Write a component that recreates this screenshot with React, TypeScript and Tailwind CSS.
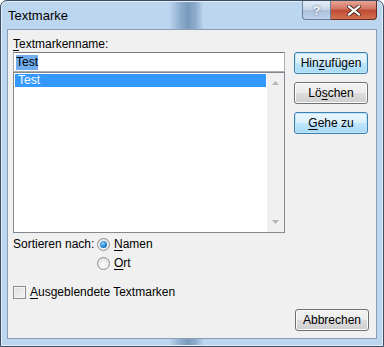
import React from 'react';

const font = { fontFamily: '"Liberation Sans", Arial, sans-serif' };

const Key: React.FC<{ children: React.ReactNode }> = ({ children }) => (
  <span className="underline underline-offset-[2px] decoration-[1px]">{children}</span>
);

const Button: React.FC<{ children: React.ReactNode; active?: boolean }> = ({ children, active }) => (
  <button
    className={`h-[22px] w-[74px] rounded-[3px] border text-[12px] leading-[20px] text-black ${
      active
        ? 'border-[#3c7fb1] bg-[linear-gradient(to_bottom,#eaf6fd_0%,#d9f0fc_50%,#bee6fd_50%,#a7d9f5_100%)] shadow-[inset_0_0_0_1px_#c4e5f6]'
        : 'border-[#707070] bg-[linear-gradient(to_bottom,#f2f2f2_0%,#ebebeb_50%,#dddddd_50%,#cfcfcf_100%)] shadow-[inset_0_0_0_1px_#fcfcfc]'
    }`}
  >
    {children}
  </button>
);

const Radio: React.FC<{ checked?: boolean }> = ({ checked }) => (
  <span className="flex h-[13px] w-[13px] shrink-0 items-center justify-center rounded-full border border-[#8e8f8f] bg-[radial-gradient(circle_at_50%_60%,#ffffff_0%,#e4e4e4_70%,#cfcfcf_100%)]">
    {checked && (
      <span className="h-[7px] w-[7px] rounded-full bg-[radial-gradient(circle_at_40%_35%,#8fd2ff_0%,#1a7fd0_60%,#0d4a8a_100%)]" />
    )}
  </span>
);

export default function App() {
  return (
    <div className="w-[384px] h-[347px] overflow-hidden" style={font}>
      <div className="flex h-full w-full flex-col rounded-t-[7px] border border-[#3b4d63] bg-[linear-gradient(to_right,#bcd6f0_0%,#bcd6f0_44%,#8eadcd_47%,#7a9abd_49%,#8eadcd_51%,#bcd6f0_53%,#bcd6f0_100%)] shadow-[inset_0_0_0_1px_#e3eefa]">
        {/* title bar */}
        <div className="flex h-[28px] shrink-0 items-start">
          <div className="pl-[7px] pt-[7px] text-[13px] leading-[15px] text-black">Textmarke</div>
          <div className="ml-auto mr-[6px] flex">
            <div className="flex h-[19px] w-[29px] items-center justify-center rounded-bl-[4px] border border-t-0 border-[#6b7f98] bg-[linear-gradient(to_bottom,#e4edf7_0%,#c5d6e8_50%,#a9c0da_50%,#bfd4ea_100%)] text-[13px] font-bold leading-none text-[#f4f8fc] [text-shadow:0_0_2px_#44576e]">
              ?
            </div>
            <div className="flex h-[19px] w-[46px] items-center justify-center rounded-br-[4px] border border-l-0 border-t-0 border-[#6b2a22] bg-[linear-gradient(to_bottom,#e8a493_0%,#d27462_45%,#c14a35_50%,#d2704f_100%)]">
              <svg width="14" height="11" viewBox="0 0 14 11">
                <path d="M2 1.5 L12 9.5 M12 1.5 L2 9.5" stroke="#4a2a22" strokeWidth="4" strokeLinecap="square" />
                <path d="M2 1.5 L12 9.5 M12 1.5 L2 9.5" stroke="#ffffff" strokeWidth="2.2" strokeLinecap="square" />
              </svg>
            </div>
          </div>
        </div>

        {/* client area */}
        <div className="mx-[6px] flex h-[310px] shrink-0 flex-col border border-[#8b9cb3] bg-[#f0f0f0] pl-[5px] text-[12px] text-black">
          <div className="flex">
            <div className="flex w-[272px] flex-col">
              <div className="mt-[7px] h-[15px] leading-[15px]">
                <Key>T</Key>extmarkenname:
              </div>
              <div className="flex h-[20px] items-center border border-[#abadb3] border-t-[#7a7a7a] bg-white pl-[2px]">
                <span className="bg-[#70aef0] leading-[15px] text-black">Test</span>
              </div>
              <div className="flex h-[161px] border border-[#828790] bg-white">
                <div className="flex-1 p-[1px]">
                  <div className="h-[13px] bg-[#3399ff] pl-[3px] leading-[13px] text-white">Test</div>
                </div>
                <div className="flex w-[17px] flex-col items-center justify-between bg-[#f0f0f0] py-[8px]">
                  <svg width="7" height="4" viewBox="0 0 7 4">
                    <path d="M0 4 L3.5 0 L7 4 Z" fill="#b5b5b5" />
                  </svg>
                  <svg width="7" height="4" viewBox="0 0 7 4">
                    <path d="M0 0 L3.5 4 L7 0 Z" fill="#b5b5b5" />
                  </svg>
                </div>
              </div>
            </div>
            <div className="ml-[9px] flex flex-col gap-[8px] pt-[22px]">
              <Button active>
                Hin<Key>z</Key>ufügen
              </Button>
              <Button>
                Lö<Key>s</Key>chen
              </Button>
              <Button active>
                <Key>G</Key>ehe zu
              </Button>
            </div>
          </div>

          <div className="mt-[3px] flex h-[16px] items-center">
            <span className="w-[84px] shrink-0 whitespace-nowrap">Sortieren nach:</span>
            <Radio checked />
            <span className="ml-[4px]">
              <Key>N</Key>amen
            </span>
          </div>
          <div className="mt-[3px] flex h-[16px] items-center pl-[84px]">
            <Radio />
            <span className="ml-[4px]">
              <Key>O</Key>rt
            </span>
          </div>

          <div className="mt-[13px] flex h-[16px] items-center">
            <span className="h-[13px] w-[13px] shrink-0 border border-[#8e8f8f] bg-[linear-gradient(135deg,#dcdcdc_0%,#f6f6f6_100%)] shadow-[inset_0_0_0_1px_#f4f4f4]" />
            <span className="ml-[4px] whitespace-nowrap">
              <Key>A</Key>usgeblendete Textmarken
            </span>
          </div>

          <div className="mt-[9px] flex justify-end pr-[7px]">
            <Button>Abbrechen</Button>
          </div>
        </div>
      </div>
    </div>
  );
}
